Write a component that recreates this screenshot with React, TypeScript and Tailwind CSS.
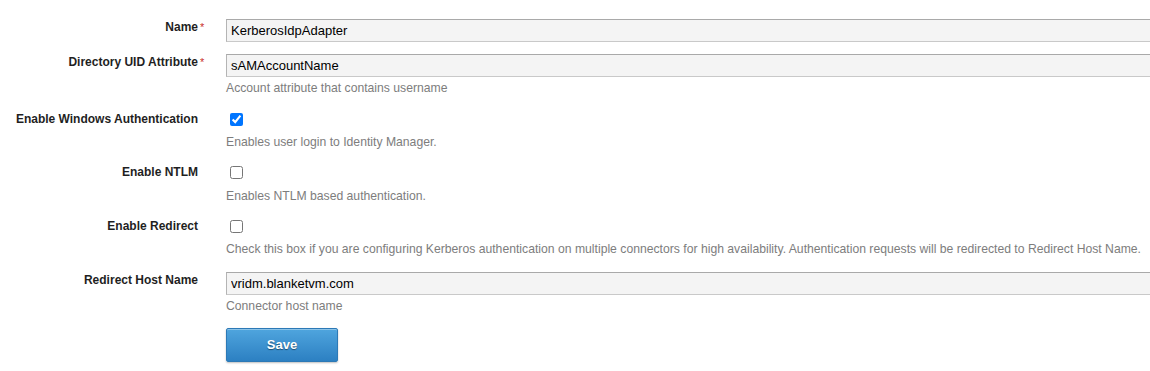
import type { ReactNode } from "react";

function Row({
  label,
  required,
  className,
  children,
}: {
  label: string;
  required?: boolean;
  className: string;
  children: ReactNode;
}) {
  return (
    <div className={"flex " + className}>
      <div className="w-[198px] shrink-0 pt-px text-right text-[12px] font-bold leading-4 text-[#1f1f1f]">
        <span className="relative">
          {label}
          {required && (
            <span className="absolute left-full top-[-1px] ml-[2px] text-[11px] font-normal text-[#c9302c]">
              *
            </span>
          )}
        </span>
      </div>
      <div className="ml-[28px] flex flex-col">{children}</div>
    </div>
  );
}

function TextField({ value }: { value: string }) {
  return (
    <input
      defaultValue={value}
      className="mt-px h-[23px] w-[960px] border border-[#c9c9c9] border-t-[#a9a9a9] border-l-[#b4b4b4] bg-[#f4f4f4] px-1 text-[13px] text-black outline-none"
    />
  );
}

function Help({ children, className }: { children: ReactNode; className: string }) {
  return (
    <p className={"whitespace-nowrap text-[12.2px] leading-4 text-[#7d7d7d] " + className}>
      {children}
    </p>
  );
}

function Check({ checked }: { checked?: boolean }) {
  return (
    <input
      type="checkbox"
      defaultChecked={checked}
      className="ml-[4px] mt-[3px] size-[13px]"
    />
  );
}

export default function App() {
  return (
    <div className="h-[371px] w-[1150px] overflow-hidden bg-white pt-[18px] font-['Liberation_Sans',Arial,sans-serif]">
      <Row label="Name" required className="">
        <TextField value="KerberosIdpAdapter" />
      </Row>

      <Row label="Directory UID Attribute" required className="mt-[11px]">
        <TextField value="sAMAccountName" />
        <Help className="mt-[3px]">Account attribute that contains username</Help>
      </Row>

      <Row label="Enable Windows Authentication" className="mt-[14px]">
        <Check checked />
        <Help className="mt-[8px]">Enables user login to Identity Manager.</Help>
      </Row>

      <Row label="Enable NTLM" className="mt-[13px]">
        <Check />
        <Help className="mt-[9px]">Enables NTLM based authentication.</Help>
      </Row>

      <Row label="Enable Redirect" className="mt-[13px]">
        <Check />
        <Help className="mt-[8px]">
          Check this box if you are configuring Kerberos authentication on multiple connectors for high
          availability. Authentication requests will be redirected to Redirect Host Name.
        </Help>
      </Row>

      <Row label="Redirect Host Name" className="mt-[14px]">
        <TextField value="vridm.blanketvm.com" />
        <Help className="mt-[3px]">Connector host name</Help>
        <button className="mt-[14px] h-[34px] w-[112px] rounded-[2px] border border-[#2c79b6] bg-linear-to-b from-[#4fa5de] to-[#2c80c2] text-[13px] font-bold text-white shadow-[inset_0_1px_0_rgba(255,255,255,0.35),0_1px_2px_rgba(0,0,0,0.25)] [text-shadow:0_1px_1px_rgba(0,0,0,0.45)]">
          Save
        </button>
      </Row>
    </div>
  );
}
